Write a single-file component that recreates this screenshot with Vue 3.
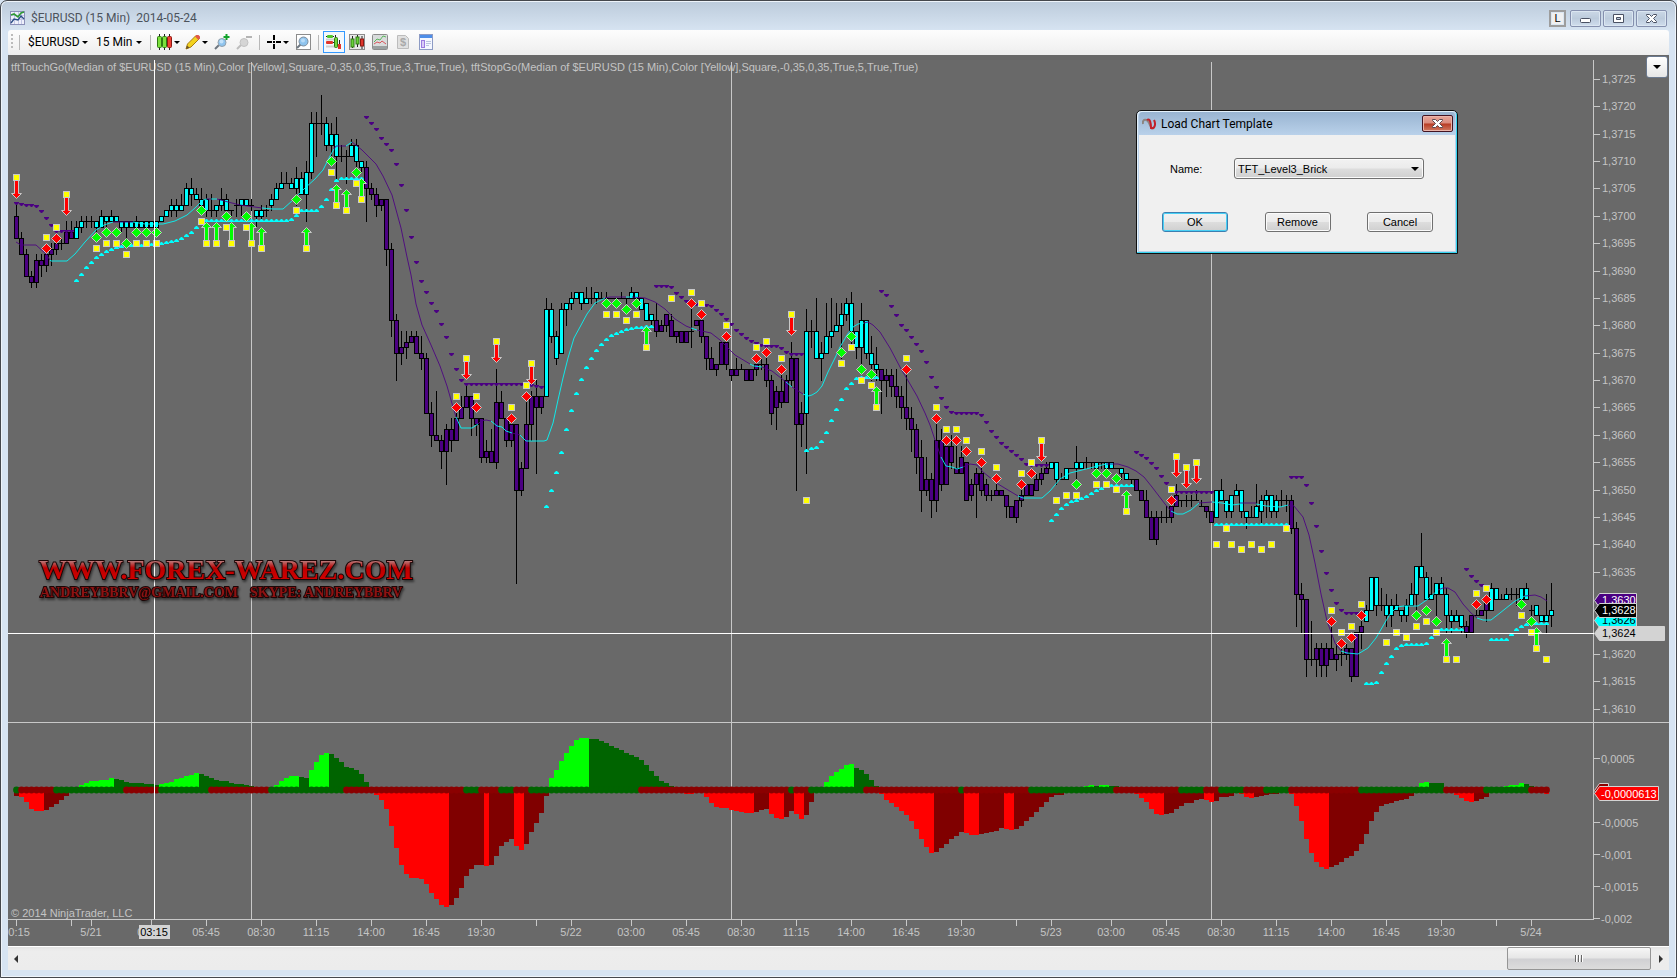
<template>
  <div class="window">
    <header class="titlebar">
      <svg class="app-icon" width="16" height="16" viewBox="0 0 16 16">
        <rect x=".5" y="1.5" width="14" height="13" fill="#eef0fb" stroke="#8b90b8" />
        <path d="M1 5.5h13M1 9.5h13M4.5 2v12M8.5 2v12M11.5 2v12" stroke="#c3c7e6" />
        <path d="M1 5l3-1 4 3 3-4 3-1" fill="none" stroke="#2f9a35" stroke-width="1.6" />
        <path d="M1 13l3-4 4 1 3-4 3 3" fill="none" stroke="#2b4f86" stroke-width="1.4" />
      </svg>
      <h1>$EURUSD (15 Min)&nbsp; 2014-05-24</h1>
      <div class="window-buttons">
        <button class="link-btn" type="button">L</button>
        <button type="button" aria-label="Minimize">
          <svg width="13" height="13" viewBox="0 0 13 13">
            <rect x="1.5" y="6.5" width="10" height="4" rx="1" fill="#fff" stroke="#4a5163" />
          </svg>
        </button>
        <button type="button" aria-label="Maximize">
          <svg width="13" height="13" viewBox="0 0 13 13">
            <path
              d="M1.5 2.5h10v8h-10zM4.5 5.5v2h4v-2z"
              fill="#fff"
              fill-rule="evenodd"
              stroke="#4a5163"
            />
          </svg>
        </button>
        <button type="button" aria-label="Close">
          <svg width="13" height="13" viewBox="0 0 13 13">
            <path :d="closeCross" fill="#fff" stroke="#4a5163" />
          </svg>
        </button>
      </div>
    </header>

    <nav class="toolbar">
      <span class="grip"></span>
      <span class="sep"></span>
      <button class="text-btn instrument" type="button">$EURUSD <i class="caret"></i></button>
      <button class="text-btn interval" type="button">15 Min <i class="caret"></i></button>
      <span class="sep"></span>
      <button class="drop-btn" type="button" aria-label="Chart style">
        <svg width="16" height="16" viewBox="0 0 16 16">
          <path d="M2.5 0v16M7.5 0v16M12.5 0v16" stroke="#222" />
          <rect x=".5" y="2.5" width="4" height="11" rx="1" fill="#7be03c" stroke="#2f7a12" />
          <rect x="5.5" y="2.5" width="4" height="11" rx="1" fill="#7be03c" stroke="#2f7a12" />
          <rect x="10.5" y="2.5" width="4" height="11" rx="1" fill="#ee4034" stroke="#8d1a12" />
        </svg>
        <i class="caret"></i>
      </button>
      <button class="drop-btn" type="button" aria-label="Drawing tools">
        <svg width="16" height="16" viewBox="0 0 16 16">
          <path d="M1 15l1.5-5L11 1.5l3.500 3L6 13z" fill="#f3d21e" stroke="#a67c12" />
          <path d="M10 2.5l1.5-1.5h2l1.5 1.500v1.500L13.500 6z" fill="#e0584a" />
          <path d="M1 15l1-3.500 2.500 2.200z" fill="#6b5426" />
        </svg>
        <i class="caret"></i>
      </button>
      <button class="icon-btn" type="button" aria-label="Zoom in">
        <svg width="16" height="16" viewBox="0 0 16 16">
          <path d="M1 15l4-4" stroke="#6d7680" stroke-width="2" />
          <circle cx="8" cy="8.5" r="4" fill="#8fc4ee" stroke="#93a0ab" />
          <circle cx="7.5" cy="7.5" r="2" fill="#c3e2fa" />
          <path d="M12.5 0v6M9.5 3h6" stroke="#12a32c" stroke-width="2" />
        </svg>
      </button>
      <button class="icon-btn" type="button" aria-label="Zoom out" disabled>
        <svg width="16" height="16" viewBox="0 0 16 16">
          <path d="M1 15l4-4" stroke="#bdbdbd" stroke-width="2" />
          <circle cx="8" cy="8.5" r="4" fill="#d5d5d5" stroke="#c2c2c2" />
          <path d="M10 3h6" stroke="#b4b4b4" stroke-width="2" />
        </svg>
      </button>
      <span class="sep"></span>
      <button class="drop-btn" type="button" aria-label="Crosshair">
        <svg width="16" height="16" viewBox="0 0 16 16">
          <path d="M8 1v5M8 10v5M1 8h5M10 8h5" stroke="#000" stroke-width="2" />
          <rect x="7" y="7" width="2" height="2" />
        </svg>
        <i class="caret"></i>
      </button>
      <button class="icon-btn" type="button" aria-label="Data box">
        <svg width="16" height="16" viewBox="0 0 16 16">
          <rect x="1.5" y=".5" width="14" height="15" fill="#fff" stroke="#8c8c8c" />
          <path d="M2 14l4-4" stroke="#6d7680" stroke-width="2" />
          <circle cx="8.5" cy="7.5" r="4.5" fill="#8fc4ee" stroke="#7c8c9b" />
          <circle cx="8" cy="6.5" r="2" fill="#b9dcf8" />
        </svg>
      </button>
      <span class="sep"></span>
      <div class="toggles">
        <button class="icon-btn active" type="button" aria-label="Chart trader">
          <svg width="16" height="16" viewBox="0 0 16 16">
            <path d="M0 5.5h10M0 12.5h10" stroke="#cfcfcf" stroke-width="2" />
            <path d="M0 2.5h8M0 8.5h9M9.5 1v3M13.5 6v4" stroke="#222" />
            <rect x="1" y="1" width="6" height="3" rx="1" fill="#4fc72a" />
            <rect x="0" y="7" width="7" height="3" rx="1" fill="#e0352b" />
            <rect x="8.5" y="3.5" width="3" height="10" rx="1" fill="#6fd83c" stroke="#2f7a12" />
            <rect x="12" y="10" width="3" height="5" fill="#e0352b" />
          </svg>
        </button>
        <button class="icon-btn" type="button" aria-label="Data series">
          <svg width="16" height="16" viewBox="0 0 16 16">
            <rect x=".5" y=".5" width="15" height="15" fill="#e8e8e8" stroke="#8c8c8c" />
            <path d="M3.5 2v12M8.5 1v12M13 2v13" stroke="#222" />
            <rect x="2" y="5" width="3" height="8" fill="#69d23a" stroke="#2f7a12" />
            <rect x="7" y="3" width="3" height="7" fill="#69d23a" stroke="#2f7a12" />
            <rect x="11.5" y="5" width="3" height="7" fill="#e0352b" stroke="#8d1a12" />
          </svg>
        </button>
        <button class="icon-btn" type="button" aria-label="Indicators">
          <svg width="16" height="16" viewBox="0 0 16 16">
            <rect x=".5" y=".5" width="15" height="15" rx="1" fill="#d9dcdc" stroke="#8c8c8c" />
            <path d="M1 12h14v3H1z" fill="#9aa0a0" />
            <path d="M2 8l3-3 3 1 3-4 3 1" fill="none" stroke="#5cb75f" />
            <path d="M2 10l3-2 3 1 2-2 4 3" fill="none" stroke="#d9565c" />
          </svg>
        </button>
        <button class="icon-btn" type="button" aria-label="Strategies" disabled>
          <svg width="14" height="16" viewBox="0 0 14 16">
            <path d="M1.5 1.5h8l3 3v10h-11z" fill="#e0e0e0" stroke="#bcbcbc" />
            <text x="7" y="12" text-anchor="middle" class="dollar">$</text>
          </svg>
        </button>
        <button class="icon-btn" type="button" aria-label="Properties">
          <svg width="16" height="16" viewBox="0 0 16 16">
            <rect x="1.5" y=".5" width="13" height="15" fill="#f4f7ff" stroke="#8d9bc4" />
            <rect x="2" y="1" width="12" height="3" fill="#4e8ee8" />
            <rect x="3.5" y="6.5" width="3" height="7" fill="#d9ccf7" stroke="#9a7be0" />
            <path d="M8 7.5h5M8 9.5h5M8 11.5h3" stroke="#b9c4de" />
          </svg>
        </button>
      </div>
    </nav>

    <main class="chart">
      <svg class="plot" viewBox="8 55 1661 891">
        <text class="label" x="11" y="71">{{ indicatorTitle }}</text>

        <g class="frame" shape-rendering="crispEdges">
          <path d="M8 722.5H1669M8 919.5H1594M1593.5 60V920" />
          <path v-for="x in sessions" :key="x" :d="`M${x}.5 62V919`" />
          <path v-for="t in priceTicks" :key="t.text" :d="`M1594 ${t.y}.5h6`" />
          <path v-for="t in oscTicks" :key="t.text" :d="`M1594 ${t.y}.5h6`" />
          <path v-for="t in timeTicks" :key="t.x" :d="`M${t.x}.5 920v6`" />
        </g>
        <text v-for="t in priceTicks" :key="t.text" class="label" x="1602" :y="t.y + 4">{{ t.text }}</text>
        <text v-for="t in oscTicks" :key="t.text" class="label" x="1601" :y="t.y + 5">{{ t.text }}</text>
        <text v-for="t in timeTicks" :key="t.x" class="label middle" :x="t.x" y="936">{{ t.text }}</text>
        <text class="label" x="11" y="917">© 2014 NinjaTrader, LLC</text>

        <g shape-rendering="crispEdges">
          <rect
            v-for="b in histogram"
            :key="b.x"
            :x="b.x"
            :y="b.y"
            width="5"
            :height="b.h"
            :fill="b.color"
          />
        </g>
        <circle v-for="d in zeroDots" :key="d.x" :cx="d.x" cy="790" r="3.4" :fill="d.color" />

        <g shape-rendering="crispEdges">
          <path :d="wicks" stroke="#000" />
          <path :d="bodies.up" :fill="UP" stroke="#000" />
          <path :d="bodies.down" :fill="DOWN" stroke="#000" />
        </g>
        <path :d="trailPath.up" :fill="UP" />
        <path :d="trailPath.down" :fill="DOWN" />
        <polyline
          v-for="(line, i) in average"
          :key="i"
          :points="line"
          class="average"
          :stroke="i % 2 ? UP : DOWN"
        />

        <g v-for="(s, i) in signals" :key="i" stroke="#c8c8c8">
          <path v-if="s.arrow" :d="s.arrow" :fill="s.color" />
          <path v-if="s.diamond" :d="s.diamond" :fill="s.color" />
          <rect :x="s.x - 3" :y="s.y - 3" width="6" height="6" fill="#ff0" />
        </g>

        <path class="crosshair" d="M8 633.5H1594M154.5 60V919" shape-rendering="crispEdges" />

        <g v-for="t in priceTags" :key="t.text">
          <path :d="tagShape(t.y, t.width)" :fill="t.fill" stroke="#d3d3d3" />
          <text class="tag" x="1602" :y="t.y + 4" :fill="t.color">{{ t.text }}</text>
        </g>
        <path :d="tagShape(790, 14)" fill="#8b0000" stroke="#d3d3d3" />
        <path :d="tagShape(793, 64)" fill="#f00" stroke="#d3d3d3" />
        <text class="tag" x="1601" y="798" fill="#fff">-0,0000613</text>
        <rect x="139" y="925" width="31" height="14" fill="#d3d3d3" />
        <text class="tag middle" x="154" y="936">03:15</text>

        <defs>
          <linearGradient id="wm" x1="0" y1="0" x2="0" y2="1">
            <stop offset=".2" stop-color="#b88" />
            <stop offset=".45" stop-color="#b00" />
            <stop offset="1" stop-color="#d00" />
          </linearGradient>
        </defs>
        <g class="watermark">
          <text x="39" y="579" font-size="28" fill="url(#wm)">WWW.FOREX-WAREZ.COM</text>
          <text x="40" y="597" font-size="14" fill="#8e1212">ANDREYBBRV@GMAIL.COM</text>
          <text x="250" y="597" font-size="14" fill="#8e1212">SKYPE: ANDREYBBRV</text>
        </g>
      </svg>
      <button class="panel-btn" type="button" aria-label="Panel menu"><i class="caret big"></i></button>
    </main>

    <div class="scrollbar">
      <button type="button" class="scroll-arrow" aria-label="Scroll left"><i class="left"></i></button>
      <div class="track">
        <button type="button" class="thumb" aria-label="Scroll position"><i></i><i></i><i></i></button>
      </div>
      <button type="button" class="scroll-arrow" aria-label="Scroll right"><i class="right"></i></button>
    </div>

    <form class="dialog" role="dialog" aria-labelledby="dialog-title" @submit.prevent>
      <div class="dialog-title">
        <svg width="14" height="12" viewBox="0 0 14 12">
          <path d="M1 6c-1-5 4-6 6-1s3 6 5 5" fill="none" stroke="#8d8580" stroke-width="2" />
          <path d="M5 2c3-2 4 3 4 8 4 1 5-4 3-8" fill="none" stroke="#c2202b" stroke-width="2" />
        </svg>
        <h2 id="dialog-title">Load Chart Template</h2>
        <button class="dialog-close" type="button" aria-label="Close dialog">
          <svg width="13" height="13" viewBox="0 0 13 13">
            <path :d="closeCross" fill="#fff" stroke="#5c4a50" />
          </svg>
        </button>
      </div>
      <div class="dialog-body">
        <div class="field">
          <label for="template">Name:</label>
          <div class="select-wrap">
            <select id="template" v-model="template">
              <option>TFT_Level3_Brick</option>
            </select>
            <i class="caret big"></i>
          </div>
        </div>
        <div class="actions">
          <button class="default" type="submit">OK</button>
          <button type="button">Remove</button>
          <button type="button">Cancel</button>
        </div>
      </div>
    </form>
  </div>
</template>

<script setup>
import { ref } from 'vue'

const UP = '#00ffff'
const DOWN = '#4b0082'
const template = ref('TFT_Level3_Brick')

const closeCross = 'M1.5 2.5h3l2 2 2-2h3v1l-3 3 3 3v1h-3l-2-2-2 2h-3v-1l3-3-3-3z'
const indicatorTitle =
  'tftTouchGo(Median of $EURUSD (15 Min),Color [Yellow],Square,-0,35,0,35,True,3,True,True), ' +
  'tftStopGo(Median of $EURUSD (15 Min),Color [Yellow],Square,-0,35,0,35,True,5,True,True)'

const barX = (i) => 16 + i * 5
// prices are pips above 1,3600
const priceY = (v) => Math.round(79 + (125 - v) * 5.474)

const sessions = [251, 731, 1211]

const priceTicks = []
for (let v = 125; v >= 10; v -= 5) {
  if (v === 30 || v === 25) continue
  priceTicks.push({ y: priceY(v), text: '1,' + (3600 + v) })
}

const oscTicks = [
  { y: 758, text: '0,0005' },
  { y: 822, text: '-0,0005' },
  { y: 854, text: '-0,001' },
  { y: 886, text: '-0,0015' },
  { y: 918, text: '-0,002' },
]

const timeTicks = [
  [16, '00:15'], [71, ''], [91, '5/21'], [151, '03:00'], [206, '05:45'], [261, '08:30'],
  [316, '11:15'], [371, '14:00'], [426, '16:45'], [481, '19:30'], [536, ''], [571, '5/22'],
  [631, '03:00'], [686, '05:45'], [741, '08:30'], [796, '11:15'], [851, '14:00'], [906, '16:45'],
  [961, '19:30'], [1016, ''], [1051, '5/23'], [1111, '03:00'], [1166, '05:45'], [1221, '08:30'],
  [1276, '11:15'], [1331, '14:00'], [1386, '16:45'], [1441, '19:30'], [1496, ''], [1531, '5/24'],
].map(([x, text]) => ({ x, text }))

const priceTags = [
  { y: 600, width: 42, text: '1,3630', fill: DOWN, color: '#fff' },
  { y: 620, width: 42, text: '1,3626', fill: UP, color: '#000' },
  { y: 610, width: 42, text: '1,3628', fill: '#000', color: '#fff' },
  { y: 633, width: 70, text: '1,3624', fill: '#d3d3d3', color: '#000' },
]
const tagShape = (y, w) => `M1594.5 ${y}.5l5-7H${1594 + w}.5v14H1599.5z`

// bars where the trend changes side, starting with a down trend
const flips = [0, 12, 70, 106, 128, 158, 173, 207, 224, 240, 255, 270, 290, 295]
const isUp = (i) => flips.filter((f) => f <= i).length % 2 === 0

// body top, body bottom, high, low
const candles = `
100 96 102 96,96 93 97 93,93 89 94 89,89 88 90 87,92 88 93 87,92 91 93 89,93 91 93 90,94 93 95 91,95 94 96 93,95 95 96 94
97 95 99 95,97 96 99 96,98 96 99 96,99 98 100 97,99 99 100 98,99 99 100 98,99 98 99 97,100 98 101 98,100 99 100 98,100 99 101 99
100 99 100 99,99 98 99 97,99 98 99 96,99 98 99 98,99 98 100 98,99 98 99 98,99 98 99 98,99 98 99 98,99 98 99 97,100 99 100 99
101 100 101 100,102 101 103 100,102 101 103 100,102 101 104 101,105 102 106 102,105 104 107 102,104 103 105 103,103 102 105 102,103 101 104 100,101 101 104 100
102 101 102 100,103 102 105 101,103 101 104 101,101 101 101 100,102 102 103 100,103 102 103 100,103 102 103 102,102 102 103 101,101 100 101 98,101 100 102 99
101 101 102 100,103 102 104 101,105 103 106 103,106 105 108 105,106 106 108 106,106 105 107 105,107 105 109 102,107 104 108 104,108 104 110 99,117 108 119 107
117 117 119 111,117 117 122 115,117 113 118 112,115 113 117 110,115 111 118 107,111 111 113 110,111 111 112 106,113 111 114 111,113 110 114 109,110 109 110 108
109 105 110 99,105 104 106 103,104 102 105 100,103 102 103 101,103 94 103 91,94 81 95 78,81 75 82 70,76 75 79 73,77 76 79 74,78 77 79 77
78 75 79 75,75 74 78 72,74 64 75 64,64 60 66 58,60 59 68 59,59 57 60 54,61 57 62 51,61 59 63 57,63 59 64 59,65 63 67 63
67 65 69 65,67 63 67 60,63 62 63 60,63 56 63 55,57 56 59 55,57 55 61 55,66 55 72 54,66 63 68 63,63 59 63 58,62 59 64 58
62 50 62 33,54 50 55 49,62 54 66 54,67 62 68 59,67 65 70 53,67 65 67 64,83 67 85 67,83 78 84 77,78 74 79 73,83 75 84 75
84 83 84 80,85 84 86 83,86 85 86 85,86 84 86 83,85 84 87 84,85 85 87 84,86 85 86 84,85 85 86 85,85 85 86 85,85 85 85 85
85 85 85 85,85 85 86 85,85 85 85 84,86 85 87 85,86 85 86 84,85 83 85 83,84 81 84 81,82 81 82 80,81 79 84 78,80 79 81 79
82 80 82 79,81 78 82 78,79 78 79 77,79 77 79 77,79 77 79 77,79 79 83 76,81 80 81 80,81 78 81 77,78 74 78 72,74 72 76 72
73 72 73 71,77 73 77 73,77 73 77 72,72 71 72 70,72 71 74 71,72 72 73 72,72 70 72 70,72 70 72 70,73 72 74 71,73 73 74 72
73 70 74 69,70 64 71 62,68 65 69 61,68 66 71 65,70 66 71 66,74 70 77 69,74 62 74 50,64 62 66 58,79 64 83 53,79 79 81 76
79 74 85 74,75 74 77 70,78 75 84 75,79 78 85 76,80 79 84 79,82 80 84 74,84 82 85 81,84 79 86 76,79 76 79 74,81 76 84 72
81 75 81 74,75 73 78 70,73 72 76 70,72 70 72 64,71 70 72 67,71 69 72 67,69 67 72 65,67 65 69 63,65 63 72 61,63 61 65 57
61 56 62 53,56 50 59 46,52 50 56 49,52 48 53 45,59 48 62 46,59 51 61 50,58 51 59 51,58 55 60 54,54 53 58 53,56 53 58 53
55 48 55 48,51 49 52 48,53 51 54 45,53 50 54 49,51 49 52 48,49 49 50 48,50 49 51 49,50 49 50 49,49 47 49 45,47 45 47 45
48 45 48 44,49 48 51 47,51 49 51 49,51 49 51 49,52 50 53 50,53 52 54 51,54 53 55 53,55 54 55 54,55 52 55 51,52 52 53 52
54 52 54 52,54 54 54 54,55 54 58 51,55 54 55 54,55 55 56 54,55 55 55 54,55 54 55 54,55 55 55 54,55 54 55 54,55 54 55 54
54 54 54 54,54 53 54 52,53 52 53 52,52 52 52 51,52 50 52 50,50 48 50 48,48 45 50 45,45 41 46 41,45 41 46 40,45 45 46 44
45 45 47 44,47 45 47 44,49 47 51 47,48 48 48 47,48 48 49 47,48 48 49 47,48 48 50 48,47 47 48 47,47 46 47 45,46 44 46 44
50 45 50 45,50 48 52 48,48 46 48 45,49 46 49 45,50 49 51 49,50 46 50 45,46 45 46 43,45 45 47 45,47 45 51 45,48 46 49 44
49 48 50 45,49 46 49 45,48 46 49 45,48 48 50 47,48 48 49 46,48 43 49 42,43 31 44 25,31 30 33 24,30 19 30 16,19 19 26 18
21 19 22 16,21 18 22 16,21 18 22 16,21 19 25 19,20 19 22 17,20 20 22 18,21 20 22 19,21 16 21 15,24 16 24 16,25 24 27 21
28 26 29 26,34 28 34 28,34 29 34 27,29 29 32 28,29 27 31 25,29 27 30 25,29 28 31 28,28 27 28 26,29 27 30 26,31 29 33 29
36 31 36 28,36 34 42 34,34 30 35 30,31 30 34 30,33 31 33 27,33 31 34 31,31 27 32 24,27 26 28 24,27 26 28 26,27 25 27 24
25 24 26 23,27 24 27 24,27 27 28 27,28 27 28 27,30 28 31 26,32 28 33 28,32 30 32 30,30 30 31 30,31 30 32 30,31 31 32 30
31 31 32 29,32 30 32 30,32 30 33 30,28 28 29 27,29 27 29 27,27 26 27 26,27 26 31 24,28 27 33 25`
  .trim()
  .split(/[,\n]/)
  .map((row) => row.split(' ').map(Number))

let wicks = ''
const bodies = { up: '', down: '' }
candles.forEach(([top, bottom, high, low], i) => {
  const x = barX(i)
  if (high > low) wicks += `M${x}.5 ${priceY(high)}V${priceY(low) + 1}`
  if (top === bottom) {
    wicks += `M${x - 2} ${priceY(top)}.5h5`
  } else {
    bodies[isUp(i) ? 'up' : 'down'] += `M${x - 2}.5 ${priceY(top)}.5h4V${priceY(bottom)}.5h-4z`
  }
})

// trailing stop, one level per bar
const trail = [
  203, 204, 205, 205, 206, 211, 218, 225, 231, 231, 231, 231,
  280, 274, 267, 262, 257, 254, 251, 249, 247, 246, 245, 245, 245, 245, 245, 244, 244, 243, 242,
  241, 240, 238, 235, 232, 227, 223, 220, 220, 220, 220, 220, 220, 220, 220, 220, 220, 220, 220,
  220, 220, 220, 220, 220, 219, 215, 210, 210, 210, 210, 206, 199, 189, 180, 178, 178, 178, 178, 178,
  117, 123, 129, 138, 144, 150, 164, 185, 210, 237, 262, 281, 292, 303, 311, 324, 337, 354, 369, 380,
  384, 384, 384, 384, 384, 384, 384, 384, 384, 384, 384, 384, 384, 385, 386, 387,
  506, 490, 472, 452, 429, 410, 393, 379, 367, 358, 350, 344, 339, 335, 333, 331, 329, 328, 327, 327, 326, 326,
  286, 286, 286, 287, 293, 297, 301, 304, 304, 304, 305, 306, 310, 314, 319, 324, 330, 334, 338, 341,
  343, 345, 346, 346, 346, 348, 352, 354, 354, 354,
  450, 448, 447, 441, 432, 420, 409, 399, 388, 383, 378, 377, 377, 377, 377,
  291, 295, 306, 315, 325, 330, 337, 344, 351, 362, 377, 387, 398, 407, 412, 413, 413, 413, 413, 413,
  415, 422, 431, 437, 443, 447, 451, 455, 459, 464, 465, 465, 465, 465,
  520, 514, 508, 504, 501, 500, 498, 496, 493, 490, 488, 486, 485, 485, 485, 485, 485,
  452, 455, 458, 463, 468, 476, 483, 488, 492, 492, 492, 492, 492, 492, 492, 492,
  524, 524, 524, 524, 524, 524, 524, 524, 524, 524, 524, 524, 524, 524, 524,
  477, 477, 477, 485, 503, 526, 551, 573, 590, 603, 610, 613, 613, 613, 613,
  683, 683, 682, 672, 663, 656, 648, 645, 644, 644, 644, 644, 643, 637, 633, 629, 629, 629, 629, 629,
  569, 576, 581, 585, 588,
  639, 639, 639, 639, 634, 629, 626, 624, 623, 623, 623, 623,
]
const trailPath = { up: '', down: '' }
trail.forEach((y, i) => {
  const x = barX(i)
  if (isUp(i)) trailPath.up += `M${x - 2} ${y + 2}h5v-1l-2-2h-1l-2 2z`
  else trailPath.down += `M${x - 2} ${y - 1}h5v1l-2 2h-1l-2-2z`
})

// moving average, alternating down / up sections
const average = [
  '16,242 21,245 36,245 46,254 50,260',
  '50,260 51,261 67,261 75,254 85,242 96,230 104,225 113,222',
  '113,222 133,222',
  '133,222 145,224 163,224 175,221 187,215 195,208 203,200 207,199',
  '207,199 211,199',
  '211,199 217,199',
  '217,199 228,202 240,205 262,208',
  '262,208 273,209 283,209 293,200 305,188 315,179 323,170 330,156 334,149',
  '334,149 336,146 346,146',
  '346,146 352,142',
  '352,142 362,150 376,164 383,176 392,195 401,228 407,257 411,275 416,304 422,325 431,345 440,366 447,386 453,407 456,417',
  '456,417 461,428 472,428 478,424',
  '478,424 481,421 486,420 491,421',
  '491,421 497,426 502,427 506,431 512,433',
  '512,433 520,435',
  '520,435 526,441 544,441 547,440 553,423 558,400 563,378 568,358 574,338 580,327 587,314 595,303 605,298',
  '605,298 610,297 626,297',
  '626,297 632,297',
  '632,297 645,298 655,302 665,309 675,319 686,326 691,328',
  '691,328 697,330',
  '697,330 711,333 720,340 735,355 750,364',
  '750,364 754,366 762,367',
  '762,367 772,371 786,382',
  '786,382 792,387',
  '792,387 803,394',
  '803,394 808,396 812,395 817,392 822,386 828,372 835,358 840,347 847,335 853,327 858,324 864,323',
  '864,323 868,322 873,325 880,332 890,348 900,367 910,384 917,396 925,413 930,425 935,440 941,457',
  '941,457 946,466 952,467 957,469 963,467',
  '963,467 970,464 977,465 983,472 998,484 1018,496',
  '1018,496 1023,498 1042,498 1050,491 1060,479 1070,473 1090,468 1106,464',
  '1106,464 1118,464 1128,467 1136,471 1144,477 1152,487 1165,504 1171,511',
  '1171,511 1177,514 1183,514 1191,510 1199,503',
  '1199,503 1212,502',
  '1212,502 1222,503 1232,505 1240,504',
  '1240,503 1256,503',
  '1256,504 1266,506 1280,507 1288,505',
  '1288,505 1294,506 1303,517 1309,535 1315,563 1321,594 1327,621 1335,643 1341,651',
  '1341,651 1347,653 1358,654 1368,648 1376,638 1383,626 1390,614 1397,607 1404,606 1418,606 1428,599 1438,590',
  '1438,590 1443,588 1448,588 1455,592 1463,604 1471,613 1477,618',
  '1477,618 1483,620 1491,620 1500,613 1515,601 1525,596',
  '1525,596 1535,595 1541,597 1547,601',
]

// bar and y of the yellow square
const marks = {
  sellArrow: [[0, 177], [10, 194], [90, 358], [96, 341], [103, 363], [155, 314], [205, 440], [232, 456], [234, 467], [236, 462]],
  buyArrow: [
    [38, 243], [40, 243], [43, 243], [47, 243], [49, 248], [58, 248], [64, 205], [66, 210], [69, 199],
    [126, 347], [172, 407], [222, 511], [286, 659], [304, 648],
  ],
  sellDiamond: [
    [6, 237], [8, 227], [88, 396], [92, 396], [99, 407], [102, 385], [135, 292], [137, 303], [142, 325],
    [148, 347], [150, 341], [153, 358], [178, 358], [184, 407], [186, 429], [188, 429], [190, 440],
    [193, 451], [196, 467], [201, 473], [203, 462], [231, 489], [263, 610], [265, 632], [267, 626],
    [269, 604], [292, 593], [294, 588],
  ],
  buyDiamond: [
    [16, 248], [18, 243], [20, 243], [22, 254], [24, 243], [26, 243], [28, 243], [37, 221], [42, 227],
    [46, 227], [56, 210], [63, 172], [68, 183], [118, 314], [120, 314], [122, 320], [124, 314],
    [165, 363], [167, 347], [169, 380], [171, 385], [212, 495], [216, 484], [218, 484], [220, 489],
    [280, 626], [282, 621], [284, 632], [301, 615], [303, 632],
  ],
  square: [
    [131, 298], [158, 500], [208, 500], [210, 495], [240, 544], [242, 528], [243, 544], [245, 549],
    [247, 544], [249, 549], [251, 544], [254, 528], [274, 642], [276, 632], [278, 637], [288, 659], [306, 659],
  ],
}

const signals = Object.entries(marks).flatMap(([kind, list]) =>
  list.map(([bar, py]) => {
    const x = barX(bar) + 0.5
    const y = py + 0.5
    const mark = { x, y, color: kind.startsWith('sell') ? '#f00' : '#0f0' }
    if (kind === 'sellArrow') mark.arrow = `M${x - 2} ${y + 3}h4v13h3l-5 5-5-5h3z`
    if (kind === 'buyArrow') mark.arrow = `M${x - 2} ${y - 3}h4v-13h3l-5-5-5 5h3z`
    if (kind === 'sellDiamond') mark.diamond = `M${x} ${y + 6}l5 5-5 5-5-5z`
    if (kind === 'buyDiamond') mark.diamond = `M${x} ${y - 6}l5-5-5-5-5 5z`
    return mark
  }),
)

const momentum = [
  -6, -7, -12, -19, -21, -21, -20, -17, -14, -10, -6, 2, 2, 5, 7, 9, 9, 10, 10, 12, 11, 10, 8, 7, 7, 7, 6, 6, 5,
  6, 7, 8, 11, 12, 14, 15, 17, 16, 14, 12, 10, 9, 9, 7, 6, 6, 5, 4, 2, 1, 1, 1, 5, 9, 12, 14, 14, 13, 12,
  20, 28, 35, 37, 36, 32, 28, 23, 22, 20, 16, 8, 3, -5, -10, -19, -36, -58, -75, -84, -88, -88, -89, -94,
  -103, -109, -115, -117, -115, -108, -98, -86, -79, -75, -75, -76, -75, -66, -56, -52, -49, -56, -60, -54,
  -42, -33, -23, -6, 12, 20, 29, 37, 44, 50, 52, 52, 51, 51, 49, 47, 44, 42, 40, 37, 35, 33, 30, 25, 19,
  14, 9, 7, 4, 0, -1, -4, -4, -2, -2, -7, -13, -17, -18, -18, -20, -21, -22, -23, -23, -22, -20, -19, -24,
  -28, -29, -27, -21, -24, -29, -25, -12, 1, 2, 8, 14, 18, 21, 25, 26, 22, 20, 16, 10, 4, -4, -10, -13, -17,
  -21, -25, -31, -39, -49, -57, -63, -62, -58, -54, -49, -46, -42, -43, -45, -45, -44, -43, -42, -41, -38,
  -39, -40, -39, -36, -31, -27, -22, -17, -12, -7, -5, -5, 0, 0, 1, 2, 4, 5, 4, 5, 5, 4, 4, 0, 0, 0, -4, -8,
  -12, -19, -24, -25, -24, -23, -19, -16, -13, -13, -10, -9, -10, -12, -11, -7, -7, -6, -3, -4, -7, -8, -7,
  -6, -5, -4, -4, -2, -2, -4, -16, -31, -49, -63, -72, -77, -79, -77, -75, -72, -68, -66, -61, -54, -44,
  -31, -22, -16, -14, -13, -11, -10, -9, -6, -3, 7, 8, 7, 7, 7, 0, -2, -5, -8, -11, -12, -11, -9, -7, 0, 1,
  1, 4, 5, 5, 7, 6, 4, 0, -2, -4,
]
let rising = true
const histogram = momentum.map((value, i) => {
  const prev = i ? momentum[i - 1] : value
  if (value !== prev) rising = value > prev
  const color = value >= 0 ? (rising ? '#0f0' : '#006400') : rising ? '#800000' : '#f00'
  return { x: barX(i) - 2, y: value > 0 ? 790 - value : 790, h: Math.abs(value), color }
})

// first bar of each section, starting with green
const dotFlips = [
  0, 1, 8, 22, 29, 39, 51, 66, 90, 93, 97, 100, 103, 125, 155, 156, 159, 170, 189, 190, 203, 220, 233,
  238, 241, 246, 250, 255, 269, 286, 294, 303,
]
const zeroDots = momentum.map((_, i) => ({
  x: barX(i) + 0.5,
  color: dotFlips.filter((f) => f <= i).length % 2 ? '#006400' : '#8b0000',
}))
</script>

<style>
body {
  margin: 0;
  background: #d7e4f2;
}
</style>

<style scoped>
.window {
  position: relative;
  box-sizing: border-box;
  display: flex;
  flex-direction: column;
  min-height: 100vh;
  padding: 0 7px 7px;
  border: 1px solid #45484d;
  border-radius: 7px 7px 0 0;
  background: linear-gradient(#bccbdb, #d7e4f2 30px);
  box-shadow: inset 0 0 0 1px #eef4fa;
  font-family: "Liberation Sans", Arial, sans-serif;
  font-size: 11px;
}
button {
  margin: 0;
  padding: 0;
  border: 0;
  background: none;
  font: inherit;
  color: #000;
}
svg {
  display: block;
}
h1,
h2 {
  margin: 0;
  font: 12px Roboto, "Segoe UI", sans-serif;
}
.titlebar {
  display: flex;
  align-items: center;
  height: 29px;
  padding: 5px 2px 0;
  box-sizing: border-box;
}
.titlebar h1 {
  margin-left: 5px;
  color: #4c535c;
}
.window-buttons {
  display: flex;
  gap: 2px;
  margin-left: auto;
}
.window-buttons button {
  display: flex;
  align-items: center;
  justify-content: center;
  box-sizing: border-box;
  width: 31px;
  height: 17px;
  border: 1px solid #8590ae;
  border-radius: 2px;
  background: linear-gradient(#cbd8e6, #bccbdc 50%, #d0dded);
  box-shadow: inset 0 0 0 1px #dbe6f1;
}
.window-buttons .link-btn {
  width: 17px;
  margin-right: 2px;
  border: 2px solid #9d9d9d;
  border-radius: 0;
  background: #f0f0f0;
}
.toolbar {
  display: flex;
  align-items: center;
  box-sizing: border-box;
  height: 25px;
  padding: 0 0 1px 3px;
  border-radius: 3px;
  background: linear-gradient(#fdfdfd, #eee);
  font: 12px Roboto, "Segoe UI", sans-serif;
}
.grip {
  width: 4px;
  height: 16px;
  background: repeating-linear-gradient(#bbb 0 2px, transparent 2px 4px);
  background-size: 2px 100%;
  background-repeat: no-repeat;
}
.sep {
  width: 1px;
  height: 15px;
  margin: 0 4px;
  background: #b8b8b8;
}
.text-btn {
  display: flex;
  align-items: center;
  justify-content: space-between;
  box-sizing: border-box;
  padding: 0 4px;
}
.instrument {
  width: 68px;
}
.interval {
  width: 54px;
}
.caret {
  width: 0;
  height: 0;
  border: 3px solid transparent;
  border-top-color: #000;
  border-bottom: 0;
}
.caret.big {
  border-width: 4px 4px 0;
}
.drop-btn {
  display: flex;
  align-items: center;
  gap: 1px;
  box-sizing: border-box;
  width: 28px;
  padding-left: 2px;
}
.icon-btn {
  display: flex;
  align-items: center;
  justify-content: center;
  box-sizing: border-box;
  width: 22px;
  height: 22px;
}
.icon-btn.active {
  border: 1px solid #3399ff;
  background: #f3f8fd;
}
.toggles {
  display: flex;
  gap: 1px;
}
.dollar {
  font: bold 11px "Liberation Sans", Arial, sans-serif;
  fill: #a9a9a9;
}
.chart {
  position: relative;
  background: #696969;
}
.plot {
  width: 100%;
  font-size: 11px;
}
.label {
  fill: #c4c4c4;
}
.middle {
  text-anchor: middle;
}
.frame path {
  fill: none;
  stroke: #c8c8c8;
}
.average {
  fill: none;
  opacity: 0.85;
}
.crosshair {
  fill: none;
  stroke: #fff;
}
.watermark {
  font-family: "Liberation Serif", "Times New Roman", serif;
  font-weight: bold;
  stroke: #1c0606;
  stroke-width: 2px;
  paint-order: stroke;
  filter: drop-shadow(1px 2px 1px rgba(0, 0, 0, 0.5));
}
.panel-btn {
  position: absolute;
  top: 1px;
  right: 1px;
  display: flex;
  align-items: center;
  justify-content: center;
  box-sizing: border-box;
  width: 22px;
  height: 22px;
  border: 1px solid #6b7a90;
  border-radius: 3px;
  background: linear-gradient(#fff, #e6e6e6);
}
.scrollbar {
  display: flex;
  flex: 1;
  min-height: 22px;
  border-top: 1px solid #fff;
  background: linear-gradient(#e2e2e2, #ededed 4px, #ececec);
}
.track {
  display: flex;
  flex: 1;
  justify-content: flex-end;
}
.scroll-arrow {
  display: flex;
  align-items: center;
  justify-content: center;
  width: 16px;
}
.scroll-arrow i {
  border: 4px solid transparent;
}
.scroll-arrow .left {
  border-left: 0;
  border-right-color: #333;
}
.scroll-arrow .right {
  border-right: 0;
  border-left-color: #333;
}
.thumb {
  display: flex;
  align-items: center;
  justify-content: center;
  gap: 1px;
  width: 144px;
  margin-right: 2px;
  border: 1px solid #959595;
  border-radius: 2px;
  background: linear-gradient(#f6f6f6, #e6e6e6 48%, #d0d0d3 52%, #dcdcdc);
}
.thumb i {
  width: 2px;
  height: 7px;
  background: linear-gradient(90deg, #666 50%, #fff 50%);
}
.dialog {
  position: absolute;
  top: 109px;
  right: 218px;
  box-sizing: border-box;
  width: 322px;
  border: 1px solid #101010;
  border-radius: 5px 5px 0 0;
  background: #b9d1ea;
  box-shadow: inset -1px -1px #35d4f0, inset 1px 1px #e4f1fb;
  padding: 1px 2px 2px;
}
.dialog-title {
  display: flex;
  align-items: center;
  height: 23px;
  padding: 0 2px 0 3px;
  border-radius: 4px 4px 0 0;
  background: linear-gradient(#99b4d1, #b9d1ea);
}
.dialog-title h2 {
  margin-left: 5px;
  color: #000;
}
.dialog-close {
  display: flex;
  align-items: center;
  justify-content: center;
  box-sizing: border-box;
  width: 31px;
  height: 17px;
  margin-left: auto;
  border: 1px solid #431422;
  border-radius: 2px;
  background: linear-gradient(#e8a79b, #d98a7c 48%, #b73a22 52%, #d07a62);
  box-shadow: inset 0 0 0 1px #eab5ab;
}
.dialog-body {
  padding: 23px 22px 19px 23px;
  background: #f0f0f0;
}
.field {
  display: flex;
  align-items: center;
  padding-left: 8px;
}
.field label {
  width: 64px;
}
.select-wrap {
  display: grid;
  align-items: center;
  width: 190px;
}
.select-wrap > * {
  grid-area: 1 / 1;
}
.select-wrap .caret {
  justify-self: end;
  margin-right: 5px;
  pointer-events: none;
}
select {
  appearance: none;
  box-sizing: border-box;
  width: 100%;
  height: 21px;
  padding: 0 3px;
  border: 1px solid #707070;
  border-radius: 3px;
  background: linear-gradient(#f2f2f2, #ebebeb 48%, #ddd 52%, #cfcfcf);
  box-shadow: inset 0 0 0 1px #fbfbfb;
  font: inherit;
  color: #000;
}
.actions {
  display: flex;
  justify-content: space-between;
  margin-top: 33px;
}
.actions button {
  box-sizing: border-box;
  width: 66px;
  height: 20px;
  border: 1px solid #707070;
  border-radius: 3px;
  background: linear-gradient(#f2f2f2, #ebebeb 48%, #ddd 52%, #cfcfcf);
  box-shadow: inset 0 0 0 1px #fbfbfb;
}
.actions .default {
  border-color: #3c7fb1;
  box-shadow: inset 0 0 0 1px #48d0f5;
}
</style>
